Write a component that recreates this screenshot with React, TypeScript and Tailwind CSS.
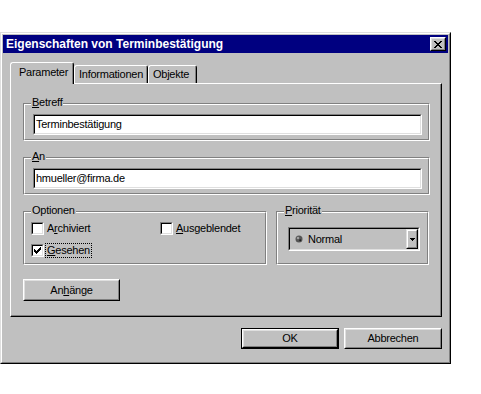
import React from "react";

const F = "font-['Liberation_Sans',Arial,sans-serif]";

function U({ children }: { children: React.ReactNode }) {
  return <span className="underline underline-offset-[1px]">{children}</span>;
}

function Group({
  label,
  className,
  children,
}: {
  label: React.ReactNode;
  className: string;
  children?: React.ReactNode;
}) {
  return (
    <div
      className={`relative border border-t-[#808080] border-l-[#808080] border-b-white border-r-white ${className}`}
    >
      <div className="h-full border border-t-white border-l-white border-b-[#808080] border-r-[#808080]">
        {children}
      </div>
      <span className="absolute left-[7px] top-[-8px] bg-[#c0c0c0] px-px leading-[13px]">{label}</span>
    </div>
  );
}

function Input({ value }: { value: string }) {
  return (
    <div className="w-[389px] h-[21px] border border-t-[#808080] border-l-[#808080] border-b-white border-r-white">
      <div className="h-full border border-t-black border-l-black border-b-[#dfdfdf] border-r-[#dfdfdf] bg-white flex items-center pl-[1px] leading-[13px]">
        {value}
      </div>
    </div>
  );
}

function Checkbox({ checked }: { checked?: boolean }) {
  return (
    <div className="w-[13px] h-[13px] border border-t-[#808080] border-l-[#808080] border-b-white border-r-white shrink-0">
      <div className="w-full h-full border border-t-black border-l-black border-b-[#dfdfdf] border-r-[#dfdfdf] bg-white flex items-center justify-center">
        {checked && (
          <svg width="7" height="7" viewBox="0 0 7 7" shapeRendering="crispEdges">
            <path
              d="M6 0h1v3H6zM5 1h1v3H5zM4 2h1v3H4zM3 3h1v3H3zM2 4h1v3H2zM1 3h1v3H1zM0 2h1v3H0z"
              fill="#000"
            />
          </svg>
        )}
      </div>
    </div>
  );
}

function Button({
  children,
  className,
  isDefault,
}: {
  children: React.ReactNode;
  className: string;
  isDefault?: boolean;
}) {
  const inner = (
    <div className="h-full border border-t-white border-l-white border-b-black border-r-black">
      <div className="h-full border border-t-[#dfdfdf] border-l-[#dfdfdf] border-b-[#808080] border-r-[#808080] flex items-center justify-center leading-[13px]">
        {children}
      </div>
    </div>
  );
  if (isDefault) {
    return <div className={`border border-black ${className}`}>{inner}</div>;
  }
  return <div className={className}>{inner}</div>;
}

export default function App() {
  return (
    <div className={`w-[481px] h-[394px] bg-white pt-[32px] text-[11px] tracking-[-0.25px] text-black ${F}`}>
      <div className="w-[451px] h-[332px] border border-t-[#dfdfdf] border-l-[#dfdfdf] border-b-black border-r-black">
        <div className="h-full border border-t-white border-l-white border-b-[#808080] border-r-[#808080] bg-[#c0c0c0] p-px">
          {/* Title bar */}
          <div className="h-[18px] bg-[#000080] flex items-center justify-between pl-[3px] pr-[2px]">
            <span className="text-white font-bold text-[12px] tracking-[0px] leading-[14px]">
              Eigenschaften von Terminbestätigung
            </span>
            <div className="w-[16px] h-[14px] border border-t-white border-l-white border-b-black border-r-black">
              <div className="h-full border border-t-[#dfdfdf] border-l-[#dfdfdf] border-b-[#808080] border-r-[#808080] bg-[#c0c0c0] flex items-center justify-center">
                <svg width="8" height="7" viewBox="0 0 8 7" shapeRendering="crispEdges">
                  <path
                    d="M0 0h2v1H0zM6 0h2v1H6zM1 1h2v1H1zM5 1h2v1H5zM2 2h4v1H2zM3 3h2v1H3zM2 4h4v1H2zM1 5h2v1H1zM5 5h2v1H5zM0 6h2v1H0zM6 6h2v1H6z"
                    fill="#000"
                  />
                </svg>
              </div>
            </div>
          </div>

          {/* Tabs */}
          <div className="mt-[9px] ml-[7px] h-[21px] flex items-end">
            <div className="relative z-10 -mb-px w-[64px] h-[22px] bg-[#c0c0c0] border-t border-l border-r border-t-white border-l-white border-r-black rounded-t-[3px]">
              <div className="h-full border-r border-r-[#808080] flex items-start pt-[3px] pl-[8px] leading-[13px]">
                Parameter
              </div>
            </div>
            <div className="w-[74px] h-[18px] border-t border-l border-r border-t-white border-l-white border-r-black rounded-t-[3px]">
              <div className="h-full border-r border-r-[#808080] flex items-start pt-[2px] pl-[4px] leading-[13px]">
                Informationen
              </div>
            </div>
            <div className="w-[49px] h-[18px] border-t border-l border-r border-t-white border-l-white border-r-black rounded-t-[3px]">
              <div className="h-full border-r border-r-[#808080] flex items-start pt-[2px] pl-[4px] leading-[13px]">
                Objekte
              </div>
            </div>
          </div>

          {/* Panel */}
          <div className="ml-[7px] w-[432px] h-[234px] border-t border-l border-r border-b border-t-white border-l-white border-r-black border-b-black">
            <div className="h-full border-r border-b border-r-[#808080] border-b-[#808080] pl-[12px] pt-[19px]">
              <Group
                className="w-[407px] h-[38px]"
                label={
                  <>
                    <U>B</U>etreff
                  </>
                }
              >
                <div className="pl-[8px] pt-[9px]">
                  <Input value="Terminbestätigung" />
                </div>
              </Group>

              <Group
                className="mt-[16px] w-[407px] h-[38px]"
                label={
                  <>
                    <U>A</U>n
                  </>
                }
              >
                <div className="pl-[8px] pt-[9px]">
                  <Input value="hmueller@firma.de" />
                </div>
              </Group>

              <div className="mt-[16px] flex gap-[9px]">
                <Group className="w-[244px] h-[54px]" label="Optionen">
                  <div className="pl-[6px] pt-[8px] flex flex-col gap-[8px]">
                    <div className="flex items-center h-[14px]">
                      <div className="w-[129px] flex items-center">
                        <Checkbox />
                        <span className="ml-[1px] px-[1px] border border-transparent leading-[13px]">
                          A<U>r</U>chiviert
                        </span>
                      </div>
                      <div className="flex items-center">
                        <Checkbox />
                        <span className="ml-[1px] px-[1px] border border-transparent leading-[13px]">
                          <U>A</U>usgeblendet
                        </span>
                      </div>
                    </div>
                    <div className="flex items-center h-[14px]">
                      <Checkbox checked />
                      <span className="ml-[1px] px-[1px] border border-dotted border-black leading-[13px]">
                        <U>G</U>esehen
                      </span>
                    </div>
                  </div>
                </Group>
                <Group
                  className="w-[153px] h-[54px]"
                  label={
                    <>
                      <U>P</U>riorität
                    </>
                  }
                >
                  <div className="pl-[10px] pt-[14px]">
                    <div className="w-[132px] h-[24px] border border-t-[#808080] border-l-[#808080] border-b-white border-r-white">
                      <div className="h-full border border-t-black border-l-black border-b-[#dfdfdf] border-r-[#dfdfdf] bg-[#c0c0c0] flex items-center">
                        <svg width="8" height="8" viewBox="0 0 8 8" className="ml-[5px]">
                          <circle cx="4" cy="4" r="3.5" fill="#555" />
                          <circle cx="3" cy="3" r="1.3" fill="#a0a0a0" />
                          <circle cx="5.2" cy="5.2" r="1" fill="#202020" />
                        </svg>
                        <span className="ml-[5px] flex-1 leading-[13px]">Normal</span>
                        <div className="w-[12px] h-full border border-t-[#dfdfdf] border-l-[#dfdfdf] border-b-black border-r-black">
                          <div className="h-full border border-t-white border-l-white border-b-[#808080] border-r-[#808080] flex items-center justify-center">
                            <svg width="5" height="3" viewBox="0 0 5 3" shapeRendering="crispEdges">
                              <path d="M0 0h5v1H0zM1 1h3v1H1zM2 2h1v1H2z" fill="#000" />
                            </svg>
                          </div>
                        </div>
                      </div>
                    </div>
                  </div>
                </Group>
              </div>

              <Button className="mt-[14px] w-[97px] h-[22px]">
                An<U>h</U>änge
              </Button>
            </div>
          </div>

          {/* Buttons */}
          <div className="mt-[11px] ml-[7px] w-[432px] flex justify-end gap-[5px]">
            <Button isDefault className="w-[98px] h-[21px]">
              OK
            </Button>
            <Button className="w-[98px] h-[21px]">Abbrechen</Button>
          </div>
        </div>
      </div>
    </div>
  );
}
